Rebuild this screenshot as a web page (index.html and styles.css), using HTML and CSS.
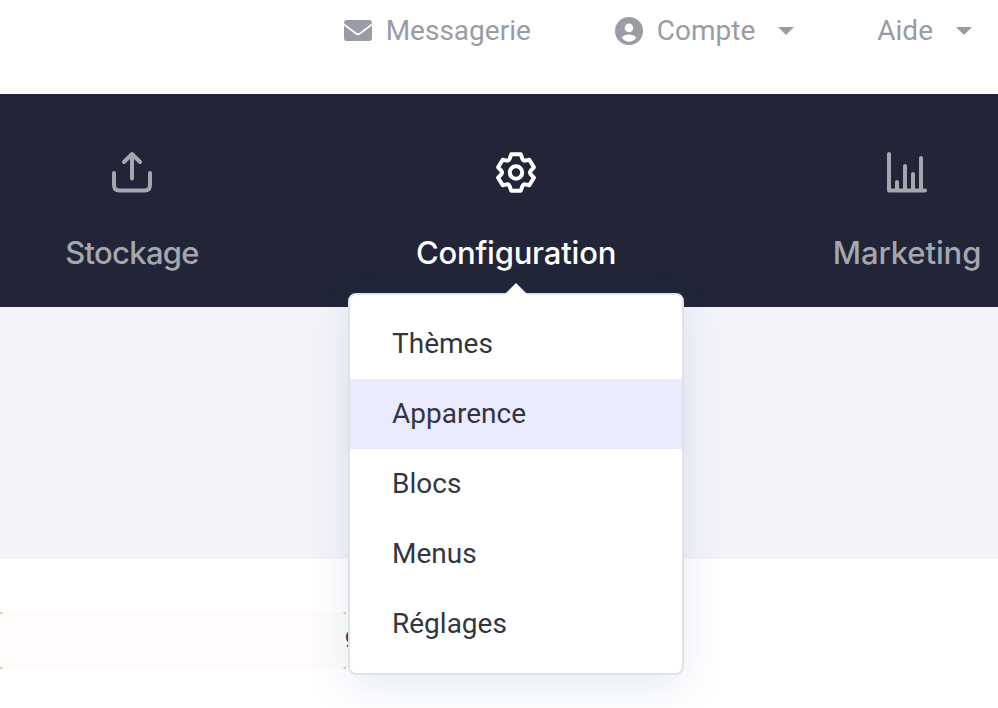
FILE: index.html
```html
<!DOCTYPE html>
<html lang="fr">
<head>
<meta charset="utf-8">
<title>Configuration</title>
<link rel="stylesheet" href="styles.css">
</head>
<body>
<header class="topbar">
  <a class="top-link mail"><svg class="mail-icon" viewBox="0 0 28 21"><path d="M3 0H25Q28 0 28 3V3.300L15.500 12.800Q14 13.900 12.500 12.800L0 3.300V3Q0 0 3 0ZM0 5.500L11.800 14.500Q14 16.100 16.200 14.500L28 5.500V18Q28 21 25 21H3Q0 21 0 18Z"/></svg><span>Messagerie</span></a>
  <a class="top-link account"><svg class="user-icon" viewBox="0 0 28 28"><path fill-rule="evenodd" d="M14 0A14 14 0 1 1 14 28A14 14 0 0 1 14 0ZM14 6.600A4.300 4.300 0 1 0 14 15.200A4.300 4.300 0 0 0 14 6.600ZM6.700 20.800Q10 24.700 14 24.700T21.300 20.800C20.200 18.300 16.500 17.400 14 17.400S7.800 18.300 6.700 20.800Z"/></svg><span>Compte</span><i class="caret"></i></a>
  <a class="top-link"><span>Aide</span><i class="caret"></i></a>
</header>
<nav class="nav">
  <a class="nav-item storage"><svg class="nav-icon" viewBox="0 0 40 42"><path d="M2 22V34Q2 39.500 7.500 39.500H32.500Q38 39.500 38 34V22M20 27.500V3M12 11L20 3L28 11"/></svg><span class="nav-label">Stockage</span></a>
  <div class="nav-item active">
    <svg class="nav-icon" viewBox="-20 -21.500 40 42"><path d="M-4.800-18.200H4.800L6.500-13.300Q7.300-11.600 9-11.900L13.300-12.800L17.900-5.200L14.600-1.700Q13.400 0 14.600 1.700L17.900 5.200L13.300 12.800L9 11.900Q7.300 11.600 6.500 13.300L4.800 18.200H-4.800L-6.500 13.300Q-7.300 11.600-9 11.900L-13.300 12.800L-17.900 5.200L-14.600 1.700Q-13.400 0-14.600-1.700L-17.900-5.200L-13.300-12.800L-9-11.900Q-7.300-11.600-6.500-13.300Z"/><circle r="6.200"/></svg>
    <span class="nav-label">Configuration</span>
    <div class="menu">
      <a>Thèmes</a><a class="selected">Apparence</a><a>Blocs</a><a>Menus</a><a>Réglages</a>
    </div>
  </div>
  <a class="nav-item marketing"><svg class="nav-icon" viewBox="0 0 40 42"><path d="M2 3V39.500H38M10 31V39M18 15V39M26 23V39M34 7V39"/></svg><span class="nav-label">Marketing</span></a>
</nav>
<section class="banner"></section>
<main class="content">
  <div class="notice"><svg class="corners" viewBox="0 0 346 57"><path d="M0 2.500Q0 .5 2.500 .5M343.500 .5Q345.500 .5 345.500 2.500M0 54.500Q0 56.500 2.500 56.500M343.500 56.500Q345.500 56.500 345.500 54.500"/></svg></div>
  <span class="note">g</span>
</main>
</body>
</html>
```
FILE: styles.css
```css
* { box-sizing: border-box; }
body { margin: 0; width: 998px; height: 708px; overflow: hidden; background: #fff; font-family: Roboto, sans-serif; }
.topbar { height: 94px; padding: 0 26px 33px 0; display: flex; justify-content: flex-end; align-items: center; gap: 84px; color: #9a9ca5; font-size: 28px; }
.top-link { display: flex; align-items: center; }
.account { margin-right: -1px; }
.top-link svg { fill: currentColor; }
.mail-icon { width: 28px; height: 21px; margin-right: 14px; }
.user-icon { width: 28px; height: 28px; margin-right: 14px; }
.caret { border: 8px solid transparent; border-top-color: currentColor; border-bottom: 0; margin-left: 23px; }
.nav { height: 213px; background: #212537; padding: 57px 0 0 65px; display: flex; align-items: flex-start; gap: 217px; color: #a5a7af; font: 550 31px/40px Inter, sans-serif; }
.nav-item { position: relative; flex: none; display: flex; flex-direction: column; align-items: center; white-space: nowrap; }
.storage { width: 134px; letter-spacing: -.7px; }
.active { width: 200px; color: #fff; letter-spacing: -.2px; }
.marketing { width: 148px; letter-spacing: -.1px; }
.nav-icon { width: 40px; height: 42px; margin-bottom: 40px; fill: none; stroke: currentColor; stroke-width: 4; stroke-linecap: round; stroke-linejoin: round; }
.menu { position: absolute; z-index: 2; top: 142px; left: -68px; width: 336px; height: 382px; padding: 14px 0; border: 2px solid #e0e2e8; border-radius: 8px; background: #fff; box-shadow: 0 12px 40px rgba(50, 90, 160, .12); color: #34363f; font: 28px/70px Roboto, sans-serif; letter-spacing: 0; }
.menu::before { content: ""; position: absolute; top: -12px; left: 154px; border: 12px solid transparent; border-bottom-color: #fff; border-top: 0; }
.menu a { display: block; height: 70px; padding-left: 42px; }
.menu .selected { background: #eaebff; }
.banner { height: 252px; background: #f3f3f9; }
.content { display: flex; align-items: flex-start; padding-top: 53px; }
.notice { width: 346px; height: 57px; border-radius: 3px; background: #fffcfb; }
.corners { display: block; width: 346px; height: 57px; fill: none; stroke: #f6b49c; stroke-width: 1.3; }
.note { margin: 14px 0 0 -5px; padding-left: 4px; background: #fff; font-size: 22px; line-height: 19px; color: #34363f; }
```
